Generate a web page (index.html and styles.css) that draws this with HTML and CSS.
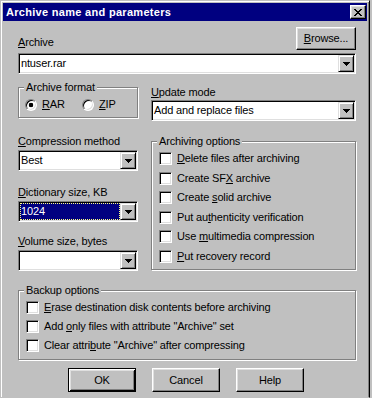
FILE: index.html
```html
<!DOCTYPE html>
<html lang="en">
<head>
    <meta charset="UTF-8">
    <title>Archive name and parameters</title>
    <link rel="stylesheet" href="styles.css">
</head>
<body>

<div class="window">
    <div class="titlebar">
        <span class="title">Archive name and parameters</span>
        <span class="close-btn">
            <svg width="8" height="7" viewBox="0 0 8 7">
                <path d="M0 0h2v1h1v1h2v-1h1v-1h2v1h-1v1h-1v1h-1v1h1v1h1v1h1v1h-2v-1h-1v-1h-2v1h-1v1h-2v-1h1v-1h1v-1h1v-1h-1v-1h-1v-1h-1z" fill="#000"/>
            </svg>
        </span>
    </div>

    <div class="dialog">
        <div class="row-top">
            <span class="label"><u>A</u>rchive</span>
            <span class="btn browse"><u>B</u>rowse...</span>
        </div>
        <div class="combo wide">
            <span class="combo-value">ntuser.rar</span>
            <span class="combo-arrow"><svg width="7" height="4" viewBox="0 0 7 4"><path d="M0 0h7v1h-1v1h-1v1h-1v1h-1v-1h-1v-1h-1v-1h-1z" fill="#000"/></svg></span>
        </div>

        <div class="columns">
            <div class="col-left">
                <div class="group format">
                    <span class="group-title">Archive format</span>
                    <div class="radios">
                        <span class="radio-item rar"><span class="radio checked"></span><span><u>R</u>AR</span></span>
                        <span class="radio-item"><span class="radio"></span><span><u>Z</u>IP</span></span>
                    </div>
                </div>

                <div class="label field-label first"><u>C</u>ompression method</div>
                <div class="combo">
                    <span class="combo-value">Best</span>
                    <span class="combo-arrow"><svg width="7" height="4" viewBox="0 0 7 4"><path d="M0 0h7v1h-1v1h-1v1h-1v1h-1v-1h-1v-1h-1v-1h-1z" fill="#000"/></svg></span>
                </div>

                <div class="label field-label"><u>D</u>ictionary size, KB</div>
                <div class="combo">
                    <span class="combo-value selected">1024</span>
                    <span class="combo-arrow"><svg width="7" height="4" viewBox="0 0 7 4"><path d="M0 0h7v1h-1v1h-1v1h-1v1h-1v-1h-1v-1h-1v-1h-1z" fill="#000"/></svg></span>
                </div>

                <div class="label field-label last"><u>V</u>olume size, bytes</div>
                <div class="combo">
                    <span class="combo-value"></span>
                    <span class="combo-arrow"><svg width="7" height="4" viewBox="0 0 7 4"><path d="M0 0h7v1h-1v1h-1v1h-1v1h-1v-1h-1v-1h-1v-1h-1z" fill="#000"/></svg></span>
                </div>
            </div>

            <div class="col-right">
                <div class="label update-label"><u>U</u>pdate mode</div>
                <div class="combo">
                    <span class="combo-value">Add and replace files</span>
                    <span class="combo-arrow"><svg width="7" height="4" viewBox="0 0 7 4"><path d="M0 0h7v1h-1v1h-1v1h-1v1h-1v-1h-1v-1h-1v-1h-1z" fill="#000"/></svg></span>
                </div>

                <div class="group options">
                    <span class="group-title">Archiving options</span>
                    <div class="checks">
                        <div class="check-row"><span class="checkbox"></span><span><u>D</u>elete files after archiving</span></div>
                        <div class="check-row"><span class="checkbox"></span><span>Create SF<u>X</u> archive</span></div>
                        <div class="check-row"><span class="checkbox"></span><span>Create <u>s</u>olid archive</span></div>
                        <div class="check-row"><span class="checkbox"></span><span>Put au<u>t</u>henticity verification</span></div>
                        <div class="check-row"><span class="checkbox"></span><span>Use <u>m</u>ultimedia compression</span></div>
                        <div class="check-row"><span class="checkbox"></span><span><u>P</u>ut recovery record</span></div>
                    </div>
                </div>
            </div>
        </div>

        <div class="group backup">
            <span class="group-title">Backup options</span>
            <div class="checks">
                <div class="check-row"><span class="checkbox"></span><span><u>E</u>rase destination disk contents before archiving</span></div>
                <div class="check-row"><span class="checkbox"></span><span>Add <u>o</u>nly files with attribute &quot;Archive&quot; set</span></div>
                <div class="check-row"><span class="checkbox"></span><span>Clear attri<u>b</u>ute &quot;Archive&quot; after compressing</span></div>
            </div>
        </div>

        <div class="buttons">
            <span class="btn default">OK</span>
            <span class="btn">Cancel</span>
            <span class="btn">Help</span>
        </div>
    </div>
</div>

</body>
</html>
```

FILE: styles.css
```css
html, body {
    margin: 0;
    padding: 0;
}
body {
    height: 100vh;
    background-color: #c0c0c0;
    font-family: "Liberation Sans", Arial, sans-serif;
    font-size: 11px;
    line-height: 13px;
    letter-spacing: -0.15px;
    color: #000;
    overflow: hidden;
}
u {
    text-underline-offset: 1px;
}

/* window frame, runs past the bottom of the screen */
.window {
    width: 370px;
    height: 100%;
    box-sizing: border-box;
    border: 1px solid;
    border-color: #c0c0c0 #000 transparent #c0c0c0;
    box-shadow: inset 1px 1px #fff, inset -1px 0 #808080;
    padding: 2px 2px 0 2px;
    background-color: #c0c0c0;
    overflow: hidden;
}
.titlebar {
    height: 18px;
    background-color: #000080; /* classic navy */
    display: flex;
    align-items: center;
    justify-content: space-between;
    padding: 0 1px 0 3px;
}
.title {
    color: #fff;
    font-weight: bold;
    letter-spacing: 0.3px;
}
.close-btn {
    width: 16px;
    height: 14px;
    box-sizing: border-box;
    background-color: #c0c0c0;
    border: 1px solid;
    border-color: #fff #000 #000 #fff;
    box-shadow: inset -1px -1px #808080, inset 1px 1px #dfdfdf;
    display: flex;
    align-items: center;
    justify-content: center;
}
.close-btn svg {
    display: block;
}

.dialog {
    padding: 6px 11px 0 15px;
}

/* raised buttons */
.btn {
    display: flex;
    align-items: center;
    justify-content: center;
    box-sizing: border-box;
    width: 68px;
    height: 24px;
    background-color: #c0c0c0;
    border: 1px solid;
    border-color: #fff #000 #000 #fff;
    box-shadow: inset -1px -1px #808080, inset 1px 1px #dfdfdf;
}
.btn.default {
    border-color: #000;
    box-shadow: inset 1px 1px #fff, inset -1px -1px #000, inset 2px 2px #dfdfdf, inset -2px -2px #808080;
}

.row-top {
    display: flex;
    justify-content: space-between;
    align-items: flex-end;
    height: 23px;
}
.row-top .label {
    margin-bottom: 1px;
}
.browse {
    width: 60px;
    height: 23px;
}

/* drop-down combos */
.combo {
    display: flex;
    height: 21px;
    box-sizing: border-box;
    border: 1px solid;
    border-color: #808080 #fff #fff #808080;
    box-shadow: inset 1px 1px #000, inset -1px -1px #dfdfdf;
    background-color: #fff;
    padding: 1px;
}
.combo.wide {
    margin-top: 3px;
}
.combo-value {
    flex: 1;
    padding-left: 1px;
    line-height: 17px;
    white-space: nowrap;
    overflow: hidden;
}
.combo-value.selected {
    background-color: #000080;
    color: #fff;
    outline: 1px dotted #ffff80;
    outline-offset: -1px;
}
.combo-arrow {
    width: 16px;
    height: 17px;
    box-sizing: border-box;
    background-color: #c0c0c0;
    border: 1px solid;
    border-color: #dfdfdf #000 #000 #dfdfdf;
    box-shadow: inset 1px 1px #fff, inset -1px -1px #808080;
    display: flex;
    align-items: center;
    justify-content: center;
}
.combo-arrow svg {
    display: block;
}

.columns {
    display: flex;
    gap: 13px;
}
.col-left {
    width: 120px;
}
.col-right {
    width: 205px;
}

/* etched group boxes */
.group {
    border: 1px solid #808080;
    box-shadow: inset 1px 1px #fff, 1px 1px #fff;
}
.group-title {
    display: block;
    width: fit-content;
    margin: -7px 0 0 5px;
    padding: 0 2px;
    background-color: #c0c0c0;
}
.format {
    margin-top: 13px;
    padding-bottom: 6px;
}
.radios {
    display: flex;
    margin-top: 4px;
    padding-left: 6px;
}
.radio-item {
    display: flex;
    align-items: center;
}
.radio-item.rar {
    width: 57px;
}
.radio {
    width: 12px;
    height: 12px;
    box-sizing: border-box;
    border-radius: 50%;
    border: 1px solid;
    border-color: #808080 #fff #fff #808080;
    box-shadow: inset 1px 1px #000, inset -1px -1px #dfdfdf;
    background-color: #fff;
    margin-right: 5px;
}
.radio.checked {
    background: radial-gradient(circle, #000 2px, #fff 2.6px);
}

.field-label {
    margin-top: 15px;
    margin-bottom: 2px;
}
.field-label.first {
    margin-top: 17px;
}
.field-label.last {
    margin-top: 13px;
}
.update-label {
    margin-top: 12px;
    margin-bottom: 1px;
}

.options {
    margin-top: 20px;
    padding-bottom: 3px;
}
.checks {
    margin-top: 1px;
}
.check-row {
    display: flex;
    align-items: center;
    height: 19.5px;
    padding-left: 7px;
    white-space: nowrap;
}
.checkbox {
    width: 13px;
    height: 13px;
    box-sizing: border-box;
    border: 1px solid;
    border-color: #808080 #fff #fff #808080;
    box-shadow: inset 1px 1px #000, inset -1px -1px #dfdfdf;
    background-color: #fff;
    margin-right: 5px;
    flex-shrink: 0;
}

.backup {
    margin-top: 19px;
    padding-bottom: 4px;
}
.backup .check-row {
    height: 19px;
}

.buttons {
    display: flex;
    justify-content: center;
    gap: 16px;
    margin-top: 8px;
    padding-right: 2px;
}
```
